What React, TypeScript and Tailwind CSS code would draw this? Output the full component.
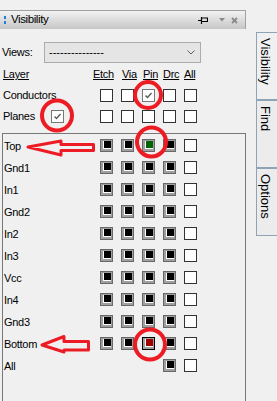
import React from 'react'

const layers = ['Top', 'Gnd1', 'In1', 'Gnd2', 'In2', 'In3', 'Vcc', 'In4', 'Gnd3', 'Bottom']

const EmptyBox = () => <div className="w-[13px] h-[13px] border border-[#333] bg-white shrink-0" />

const CheckedBox = () => (
  <div className="w-[13px] h-[13px] border border-[#777] bg-white shrink-0 flex items-center justify-center">
    <svg width="9" height="9" viewBox="0 0 9 9">
      <path d="M1.5 4.5 L3.5 6.5 L7.5 2" fill="none" stroke="#5a5a5a" strokeWidth="1.4" />
    </svg>
  </div>
)

const FilledBox = ({ inner = 'bg-black', outer = 'border-[#686868]' }: { inner?: string; outer?: string }) => (
  <div className={`w-[13px] h-[13px] border ${outer} bg-[#a0a0a0] shrink-0 flex items-center justify-center`}>
    <div className={`w-[8px] h-[8px] ${inner} border-l border-b border-white`} />
  </div>
)

// red paint marks over the panel
const Marks = () => (
  <svg className="absolute inset-0 pointer-events-none" width="277" height="401" viewBox="0 0 277 401">
    <g fill="none" stroke="#ed1c24" strokeWidth="4">
      <circle cx="148" cy="95" r="13" />
      <circle cx="57" cy="115.5" r="15" />
      <circle cx="151.5" cy="142" r="14.5" />
      <circle cx="150" cy="344.5" r="15" />
    </g>
    <g fill="#f0f0f0" stroke="#ed1c24" strokeWidth="3" strokeLinejoin="round">
      <path d="M28 147 L61 141 L61 144.5 L93.5 144.5 L93.5 150.5 L61 150.5 L61 155 Z" />
      <path d="M42 345 L64 336.5 L64 341.5 L88.5 341.5 L88.5 350 L64 350 L64 352 Z" />
    </g>
  </svg>
)

const Tab = ({ label, className }: { label: string; className: string }) => (
  <div className={`border-l border-[#8fa3b6] ${className}`}>
    <div className="ml-[2px] w-[13px] text-[13px] leading-[13px] [writing-mode:vertical-rl]">{label}</div>
  </div>
)

export default function App() {
  return (
    <div className="relative w-[277px] h-[401px] overflow-hidden bg-[#f0f0f0] flex font-['Liberation_Sans',Arial,sans-serif] text-[11px] text-black">
      <div className="w-[246px] shrink-0 pt-[10px] tracking-[-0.3px]">
        {/* title bar */}
        <div className="h-[19px] border-t border-r border-[#a0a0a0] bg-linear-to-b from-[#f3f3f3] to-[#c6c6c6] flex items-center">
          <div className="ml-[4px] flex flex-col gap-[2px]">
            <div className="w-[2px] h-[3px] bg-[#1e80dc]" />
            <div className="w-[2px] h-[3px] bg-[#1e80dc]" />
          </div>
          <span className="ml-[5px] text-[11.5px] tracking-[-0.4px]">Visibility</span>
          <div className="ml-auto flex items-center mr-[7px]">
            <svg width="10" height="8" viewBox="0 0 10 8">
              <path d="M0 4.5 H3 M3.5 1 V8 M3.5 2 H9.5 V5.5 H3.5" fill="none" stroke="#000" strokeWidth="1.2" />
            </svg>
            <svg className="ml-[11px]" width="6" height="4" viewBox="0 0 6 4">
              <path d="M0 0 H6 L3 3.5 Z" fill="#8a8a8a" />
            </svg>
            <svg className="ml-[6px]" width="7" height="7" viewBox="0 0 7 7">
              <path d="M1 1 L6 6 M6 1 L1 6" stroke="#8a8a8a" strokeWidth="1.8" />
            </svg>
          </div>
        </div>

        {/* views */}
        <div className="mt-[13px] h-[21px] flex items-center">
          <span className="w-[44px] pl-[2px]">Views:</span>
          <div className="w-[157px] h-[21px] border border-[#acacac] bg-[#e5e5e5] flex items-center justify-between pl-[4px] pr-[5px]">
            <span className="tracking-normal">---------------</span>
            <svg width="8" height="5" viewBox="0 0 8 5">
              <path d="M0.5 0.5 L4 4 L7.5 0.5" fill="none" stroke="#606060" strokeWidth="1" />
            </svg>
          </div>
        </div>

        {/* column heads */}
        <div className="mt-[1px] h-[21px] flex items-center pl-[3px] underline">
          <span className="w-[90px]">Layer</span>
          <span className="w-[29px]">Etch</span>
          <span className="w-[21px]">Via</span>
          <span className="w-[20px]">Pin</span>
          <span className="w-[21px]">Drc</span>
          <span>All</span>
        </div>
        <div className="h-[21px] flex items-center pl-[3px]">
          <span className="w-[97px]">Conductors</span>
          <div className="flex gap-[8px]">
            <EmptyBox />
            <EmptyBox />
            <CheckedBox />
            <EmptyBox />
            <EmptyBox />
          </div>
        </div>
        <div className="h-[21px] flex items-center pl-[3px]">
          <span className="w-[48px]">Planes</span>
          <div className="w-[49px]">
            <CheckedBox />
          </div>
          <div className="flex gap-[8px]">
            <EmptyBox />
            <EmptyBox />
            <EmptyBox />
            <EmptyBox />
            <EmptyBox />
          </div>
        </div>

        {/* layer list */}
        <div className="mt-[6px] ml-[2px] w-[244px] h-[300px] border border-[#787878]">
          {layers.map((name) => (
            <div key={name} className="h-[22px] flex items-center pl-[1px]">
              <span className="w-[96px] pt-[2px]">{name}</span>
              <div className="flex gap-[8px]">
                <FilledBox />
                <FilledBox />
                {name === 'Top' ? (
                  <FilledBox inner="bg-[#006400]" />
                ) : name === 'Bottom' ? (
                  <FilledBox inner="bg-[#a00000]" outer="border-black" />
                ) : (
                  <FilledBox />
                )}
                <FilledBox />
                <EmptyBox />
              </div>
            </div>
          ))}
          <div className="h-[22px] flex items-center pl-[1px]">
            <span className="w-[159px] pt-[2px]">All</span>
            <div className="flex gap-[8px]">
              <FilledBox />
              <EmptyBox />
            </div>
          </div>
        </div>
      </div>

      {/* side tabs */}
      <div className="ml-[10px] w-[21px] shrink-0 pt-[32px]">
        <Tab label="Visibility" className="h-[67px] border-t pt-[5px] bg-[#f0f0f0]" />
        <Tab label="Find" className="h-[68px] border-t-2 pt-[5px] bg-[#ececec]" />
        <Tab label="Options" className="h-[69px] border-t-2 border-b pt-[5px] bg-[#ececec]" />
      </div>

      <Marks />
    </div>
  )
}
